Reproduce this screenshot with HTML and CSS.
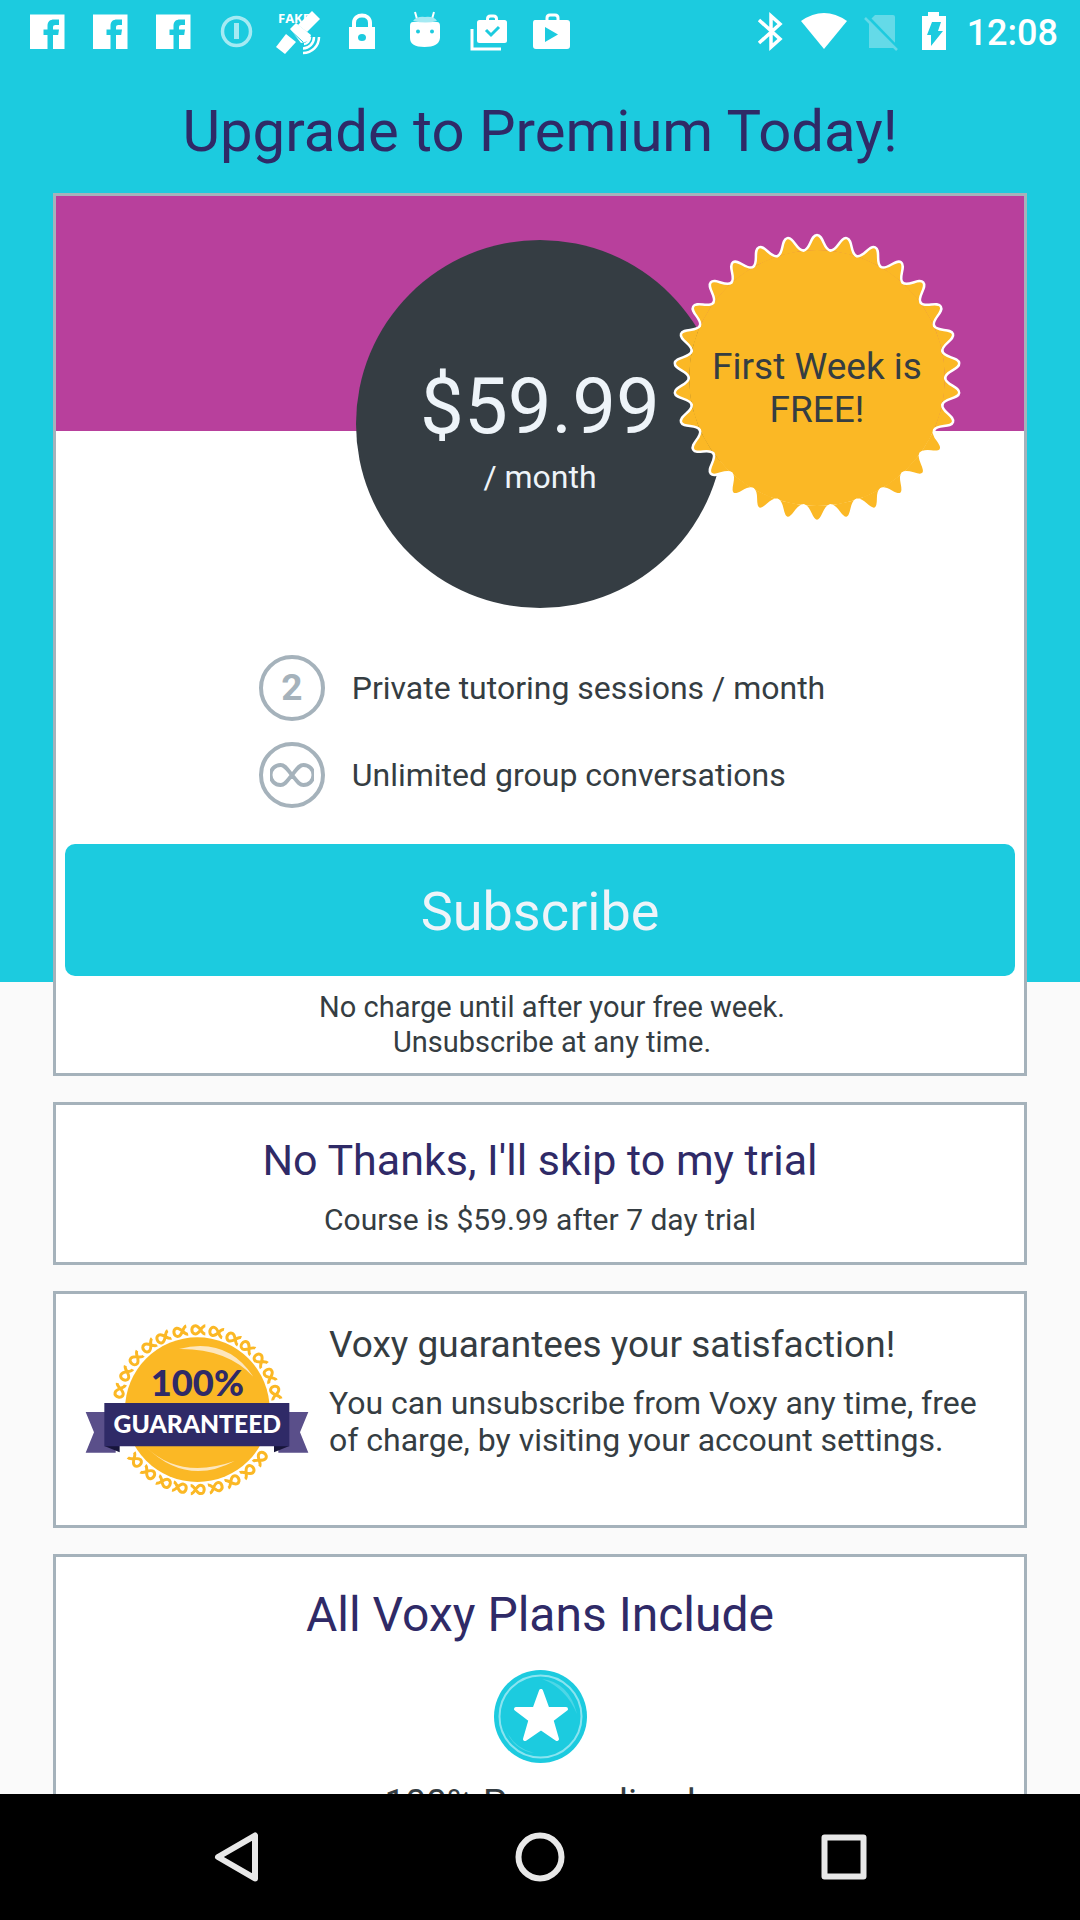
FILE: index.html
```html
<!DOCTYPE html>
<html lang="en">
<head>
<meta charset="utf-8">
<meta name="viewport" content="width=device-width, initial-scale=1">
<title>Upgrade to Premium</title>
<link rel="stylesheet" href="styles.css">
</head>
<body>
<header class="status-bar">
  <div class="status-left">
    <svg class="notice" viewBox="0 0 63 64" aria-hidden="true"><path id="fb" fill="#fff" fill-rule="evenodd" d="M14 14.500h34.500v34.500H14zM31.500 49V35H27.500v-5.500h4v-3.500c0-4.500 2.500-6.500 6.500-6.500h5v5.500h-3.500c-1.800 0-2.500.8-2.500 2.500v2h6l-.8 5.500H37V49z"/></svg>
    <svg class="notice" viewBox="0 0 63 64" aria-hidden="true"><use href="#fb"/></svg>
    <svg class="notice" viewBox="0 0 63 64" aria-hidden="true"><use href="#fb"/></svg>
    <svg class="notice" viewBox="0 0 63 64" aria-hidden="true"><g fill="none" stroke="#a5eaf3"><circle cx="31.500" cy="31.500" r="14" stroke-width="3.500"/><path d="M31.500 23v16" stroke-width="5"/></g></svg>
    <svg class="notice" viewBox="0 0 63 64" aria-hidden="true"><text x="10" y="23" class="fake">FAKE</text><g fill="#fff"><path d="M44 11l8 8-13 13-9-7z"/><path d="M22 29l6-6 15 12-2 6-8 2z"/><path d="M18 34l10 8-11 12-9-7z"/></g><path d="M22 30l13 12" stroke="#1ccbdf" stroke-width="1"/><g fill="none" stroke="#fff" stroke-width="2.500"><path d="M36 44c3 0 6-3 6-7M35 48.500c6 0 11-5 11-11.500M35 53c9 0 16-7 16-16"/></g></svg>
    <svg class="notice" viewBox="0 0 63 64" aria-hidden="true"><path fill="#fff" fill-rule="evenodd" d="M18 27h26v22H18zM27 37.500a4 3.500 0 1 0 8 0a4 3.500 0 1 0-8 0z"/><path d="M23 28v-5c0-10 16-10 16 0v5" fill="none" stroke="#fff" stroke-width="4"/></svg>
    <svg class="notice" viewBox="0 0 63 64" aria-hidden="true"><path d="M23 19l-2-7M38 19l2-7" stroke="#fff" stroke-width="2"/><path fill="#fff" d="M19 22h24q3 0 3 4v12q-1 9-15.500 9T16 38V26q0-4 3-4z"/><path fill="#a5eaf3" d="M19 21q4-5 12-4 9-1 12 4-11 3-24 0z"/><g fill="#1ccbdf"><circle cx="24" cy="31.500" r="2"/><circle cx="38" cy="31.500" r="2"/></g></svg>
    <svg class="notice" viewBox="0 0 63 64" aria-hidden="true"><path d="M15 29v20h29" fill="none" stroke="#fff" stroke-width="3"/><rect x="20" y="20" width="30" height="23" rx="2.500" fill="#fff"/><path d="M30.500 21v-2q0-3 3-3h3q3 0 3 3v2" fill="none" stroke="#fff" stroke-width="3"/><path d="M29 30l5 5 8-8" fill="none" stroke="#1ccbdf" stroke-width="3"/></svg>
    <svg class="notice" viewBox="0 0 63 64" aria-hidden="true"><path fill="#fff" fill-rule="evenodd" d="M15 20h32q3 0 3 3v23q0 3-3 3H16q-3 0-3-3V23q0-3 2-3zM25 27v15l13-7.500z"/><path d="M27 20v-2q0-3 3-3h5q3 0 3 3v2" fill="none" stroke="#fff" stroke-width="3"/></svg>
  </div>
  <div class="status-right">
    <svg class="signal" viewBox="0 0 54 64" aria-hidden="true"><path d="M16 20l21 19-9 8V16l9 8-21 19" fill="none" stroke="#fff" stroke-width="3.500"/></svg>
    <svg class="signal" viewBox="0 0 54 64" aria-hidden="true"><path fill="#fff" d="M4 21q23-16 46 0L27 49z"/></svg>
    <svg class="signal" viewBox="0 0 54 64" aria-hidden="true"><path fill="#64dae8" d="M24 15h18q2 0 2 2v31H18V21z"/><path d="M17 17l30 31" stroke="#1ccbdf" stroke-width="3"/><path d="M14 18l32 32" stroke="#64dae8" stroke-width="2.500"/></svg>
    <svg class="signal" viewBox="0 0 54 64" aria-hidden="true"><path fill="#fff" fill-rule="evenodd" d="M17 16h6v-4h11v4h7v34H17zM27 22h9l-3 9h5L26 46v-11h-4z"/></svg>
    <time class="clock">12:08</time>
  </div>
</header>

<main class="screen">
  <section class="hero">
    <h1 class="title">Upgrade to Premium Today!</h1>
    <article class="card plan">
      <div class="plan-top">
        <div class="price-circle">
          <p class="price">$59.99</p>
          <p class="period">/ month</p>
        </div>
        <div class="offer">
          <svg class="offer-shape" viewBox="-145 -145 290 290" aria-hidden="true">
            <defs>
              <path id="tooth" d="M-13.400 -127.500C-6.500 -128.200 -6.500 -143 0 -143S6.500 -128.200 13.400 -127.500"/>
              <g id="teeth"><use href="#tooth"/><use href="#tooth" transform="rotate(12)"/><use href="#tooth" transform="rotate(24)"/><use href="#tooth" transform="rotate(36)"/><use href="#tooth" transform="rotate(48)"/></g>
            </defs>
            <circle r="128" fill="#fbb825"/>
            <g fill="#fbb825" stroke="#fff" stroke-width="2.500" stroke-linecap="round">
              <use href="#teeth"/><use href="#teeth" transform="rotate(60)"/><use href="#teeth" transform="rotate(120)"/><use href="#teeth" transform="rotate(180)"/><use href="#teeth" transform="rotate(240)"/><use href="#teeth" transform="rotate(300)"/>
            </g>
          </svg>
          <p class="offer-text">First Week is<br>FREE!</p>
        </div>
      </div>
      <ul class="perks">
        <li class="perk"><span class="perk-mark">2</span>Private tutoring sessions / month</li>
        <li class="perk"><span class="perk-mark"><svg class="infinity" viewBox="0 0 44 26" role="img" aria-label="Unlimited"><path d="M22 13C17 7 15 3 10.500 3a10 10 0 0 0 0 20C15 23 17 19 22 13S29 3 33.500 3a10 10 0 0 1 0 20C29 23 27 19 22 13z" fill="none" stroke="#a5b2bb" stroke-width="4"/></svg></span>Unlimited group conversations</li>
      </ul>
      <button class="subscribe" type="button">Subscribe</button>
      <p class="note">No charge until after your free week.<br>Unsubscribe at any time.</p>
    </article>
  </section>

  <div class="stack">
    <article class="card skip">
      <a class="skip-link" href="#trial">No Thanks, I'll skip to my trial</a>
      <p class="skip-note">Course is $59.99 after 7 day trial</p>
    </article>

    <article class="card guarantee">
      <svg class="medal" viewBox="42 96 678 528" role="img" aria-label="100% guaranteed">
        <defs><path id="link" d="M24 -252C12 -252 8 -227 -6 -227C-20 -227 -20 -252 -6 -252C8 -252 12 -227 24 -227"/></defs>
        <g transform="translate(382 359)" fill="none" stroke="#fbb825" stroke-width="9">
          <use href="#link" transform="rotate(-77)"/><use href="#link" transform="rotate(-64)"/><use href="#link" transform="rotate(-51)"/><use href="#link" transform="rotate(-38)"/><use href="#link" transform="rotate(-26)"/><use href="#link" transform="rotate(-13)"/><use href="#link"/><use href="#link" transform="rotate(13)"/><use href="#link" transform="rotate(26)"/><use href="#link" transform="rotate(38)"/><use href="#link" transform="rotate(51)"/><use href="#link" transform="rotate(64)"/><use href="#link" transform="rotate(77)"/>
          <use href="#link" transform="rotate(127)"/><use href="#link" transform="rotate(140)"/><use href="#link" transform="rotate(153)"/><use href="#link" transform="rotate(166)"/><use href="#link" transform="rotate(179)"/><use href="#link" transform="rotate(192)"/><use href="#link" transform="rotate(204)"/><use href="#link" transform="rotate(217)"/><use href="#link" transform="rotate(230)"/>
        </g>
        <circle cx="382" cy="359" r="217" fill="#fbb825"/>
        <path fill="#fde6bd" d="M327 177Q470 140 550 260Q470 175 327 177zM227 470Q330 570 494 513Q350 590 227 470z"/>
        <path fill="#5a4f8a" d="M47 366h90v122H47l25-61zM715 366h-90v122h90l-25-61z"/>
        <path fill="#17153a" d="M103 468h46v19zM658 468h-46v19z"/>
        <path fill="#2f2a67" d="M103 339h555v130H103z"/>
        <text x="382" y="318" class="medal-number">100%</text>
        <text x="382" y="430" class="medal-word">GUARANTEED</text>
      </svg>
      <div class="guarantee-text">
        <h2 class="guarantee-title">Voxy guarantees your satisfaction!</h2>
        <p class="guarantee-body">You can unsubscribe from Voxy any time, free of charge, by visiting your account settings.</p>
      </div>
    </article>

    <article class="card includes">
      <h2 class="includes-title">All Voxy Plans Include</h2>
      <svg class="star" viewBox="0 0 93 93" aria-hidden="true">
        <circle cx="46.500" cy="46.500" r="46.500" fill="#1ccbdf"/>
        <circle cx="46.500" cy="46.500" r="41" fill="none" stroke="#8ae4f0" stroke-width="2"/>
        <path d="M48 9Q75 12 83 44Q72 18 48 9zM12 60Q20 78 40 83Q20 80 12 60z" fill="#4dd6e6"/>
        <path d="M47 21l6.500 18H72L57.500 50l5.500 19-16-11-16 11 5.500-19L22 39h18.500z" fill="#fff" stroke="#fff" stroke-width="4" stroke-linejoin="round"/>
      </svg>
      <h3 class="feature">100% Personalized</h3>
    </article>
  </div>
</main>

<nav class="nav-bar" aria-label="System">
  <button class="nav-button" type="button" aria-label="Back"><svg class="nav-icon" viewBox="0 0 52 52"><path d="M45 4.500v43L8 26z"/></svg></button>
  <button class="nav-button" type="button" aria-label="Home"><svg class="nav-icon" viewBox="0 0 52 52"><circle cx="26" cy="26" r="21.500"/></svg></button>
  <button class="nav-button" type="button" aria-label="Recent apps"><svg class="nav-icon" viewBox="0 0 52 52"><path d="M6.500 6.500h39v39h-39z"/></svg></button>
</nav>
</body>
</html>
```
FILE: styles.css
```css
* {
  box-sizing: border-box;
  margin: 0;
  padding: 0;
}

body {
  display: flex;
  flex-direction: column;
  height: 100vh;
  background: #fafafa;
  color: #353d42;
  font-family: Roboto, sans-serif;
  font-weight: 400;
}

.status-bar {
  display: flex;
  flex: none;
  justify-content: space-between;
  height: 64px;
  padding: 0 22px 0 16px;
  background: #1ccbdf;
}

.status-left,
.status-right {
  display: flex;
}

.notice {
  width: 63px;
  height: 64px;
}

.signal {
  width: 54px;
  height: 64px;
}

.fake {
  fill: #fff;
  font: 700 13px "Open Sans", sans-serif;
}

.clock {
  padding-left: 8px;
  color: #fff;
  font-size: 36px;
  font-weight: 500;
  line-height: 66px;
}

.screen {
  flex: 1;
  min-height: 0;
  overflow: hidden;
}

.hero {
  display: flow-root;
  padding: 0 53px;
  background: #1ccbdf;
}

.title {
  padding: 31px 0 26px;
  color: #2f2a67;
  font-size: 58px;
  font-weight: 400;
  line-height: 72px;
  text-align: center;
}

.card {
  border: 3px solid #a5b2bb;
  background: #fff;
}

.plan {
  margin-bottom: -94px;
}

.plan-top {
  position: relative;
  padding-top: 44px;
  background: linear-gradient(#b8409c 235px, #fff 235px);
}

.price-circle {
  width: 368px;
  height: 368px;
  margin: 0 auto;
  padding-top: 119px;
  border-radius: 50%;
  background: #353d43;
  color: #eef4f9;
  text-align: center;
}

.price {
  font-size: 78px;
  line-height: 96px;
}

.period {
  font-size: 32px;
  line-height: 44px;
}

.offer {
  position: absolute;
  top: 37px;
  left: calc(50% + 132px);
  width: 290px;
  height: 290px;
  padding-top: 112px;
}

.offer-shape {
  position: absolute;
  inset: 0;
}

.offer-text {
  position: relative;
  font-size: 37px;
  line-height: 43px;
  text-align: center;
}

.perks {
  display: flex;
  flex-direction: column;
  gap: 21px;
  width: fit-content;
  margin: 47px auto 36px;
  padding-left: 4px;
  list-style: none;
}

.perk {
  display: flex;
  align-items: center;
  gap: 27px;
  font-size: 32px;
  line-height: 42px;
}

.perk-mark {
  display: flex;
  align-items: center;
  justify-content: center;
  width: 66px;
  height: 66px;
  border: 4px solid #a5b2bb;
  border-radius: 50%;
  color: #a5b2bb;
  font-size: 37px;
  font-weight: 700;
}

.infinity {
  width: 44px;
  height: 26px;
}

.subscribe {
  display: block;
  width: calc(100% - 18px);
  height: 132px;
  margin: 0 9px;
  padding-top: 4px;
  border: 0;
  border-radius: 10px;
  background: #1ccbdf;
  color: #eef4f9;
  font: 400 54px/64px Roboto, sans-serif;
}

.note {
  padding: 14px 0 13px 24px;
  font-size: 29px;
  line-height: 35px;
  text-align: center;
}

.stack {
  display: flex;
  flex-direction: column;
  gap: 26px;
  padding: 120px 53px 0;
}

.skip {
  padding: 26px 0 23px;
  text-align: center;
}

.skip-link {
  display: block;
  color: #2f2a67;
  font-size: 43px;
  line-height: 58px;
  text-decoration: none;
}

.skip-note {
  padding-top: 12px;
  font-size: 30px;
  line-height: 38px;
}

.guarantee {
  display: flex;
  gap: 19px;
  padding: 28px 28px 27px;
}

.medal {
  flex: none;
  width: 226px;
  height: 176px;
}

.medal-number,
.medal-word {
  font-family: Lato, sans-serif;
  font-weight: 900;
  text-anchor: middle;
}

.medal-number {
  fill: #2f2a67;
  font-size: 109px;
}

.medal-word {
  fill: #fff;
  font-size: 74px;
}

.guarantee-title {
  font-size: 37px;
  font-weight: 400;
  line-height: 46px;
}

.guarantee-body {
  padding-top: 17px;
  font-size: 32px;
  line-height: 37px;
}

.includes {
  display: flex;
  flex-direction: column;
  align-items: center;
  padding: 28px 0;
}

.includes-title {
  color: #2f2a67;
  font-size: 48px;
  font-weight: 400;
  line-height: 60px;
}

.star {
  width: 93px;
  height: 93px;
  margin: 25px 0 18px;
}

.feature {
  font-size: 37px;
  font-weight: 400;
  line-height: 44px;
}

.nav-bar {
  display: grid;
  flex: none;
  grid-template-columns: repeat(3, 1fr);
  height: 126px;
  padding: 0 84px;
  background: #000;
}

.nav-button {
  display: grid;
  place-items: center;
  border: 0;
  background: none;
}

.nav-icon {
  width: 52px;
  height: 52px;
  fill: none;
  stroke: #e8e8e8;
  stroke-width: 6;
  stroke-linejoin: round;
}
```
